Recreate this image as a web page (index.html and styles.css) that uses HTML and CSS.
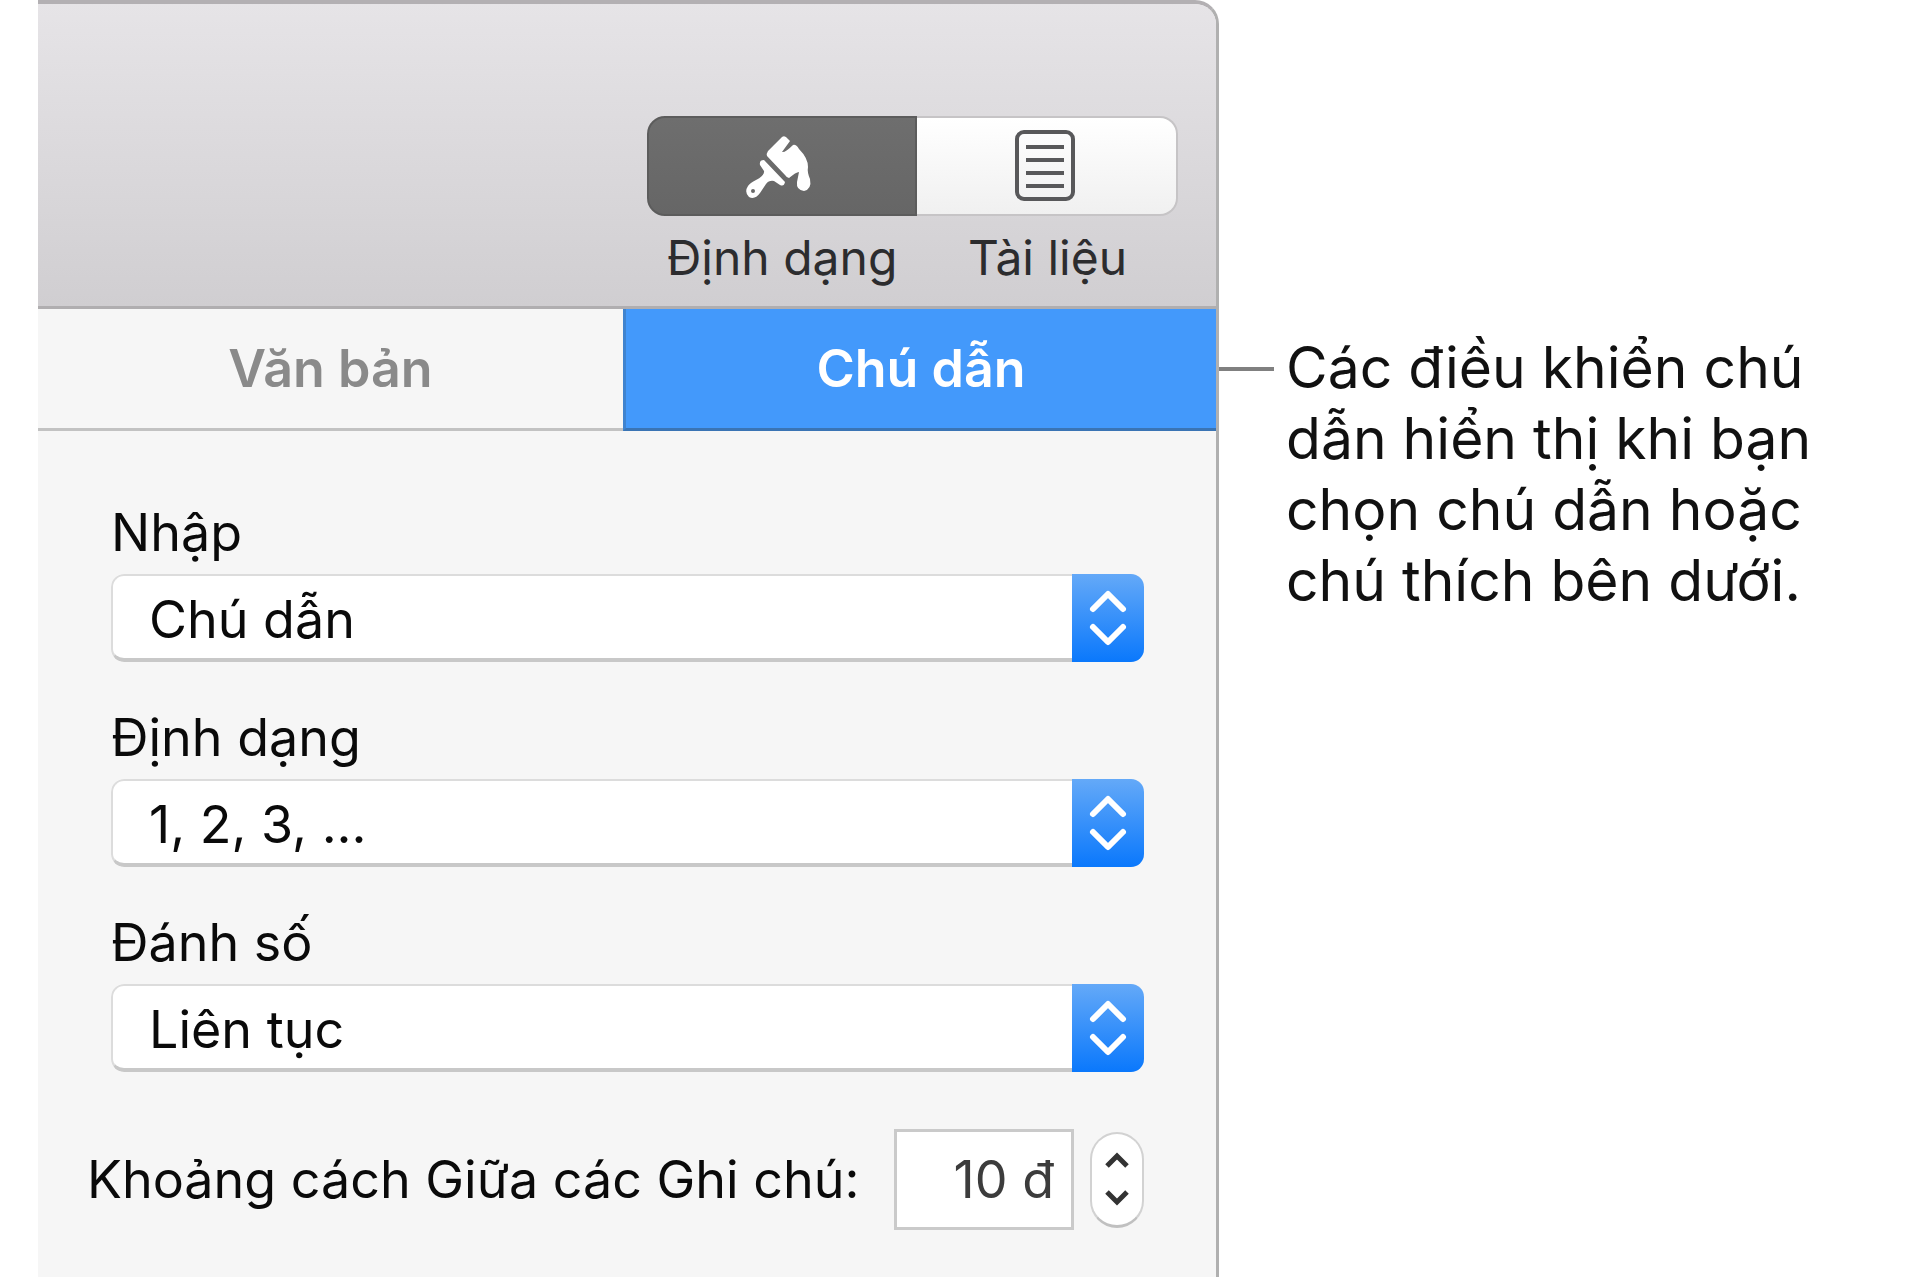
FILE: index.html
```html
<!DOCTYPE html>
<html lang="vi">
<head>
<meta charset="utf-8">
<meta name="viewport" content="width=device-width, initial-scale=1">
<title>Chú dẫn</title>
<link rel="stylesheet" href="styles.css">
</head>
<body>
<svg class="symbols" aria-hidden="true">
  <symbol id="chevrons" viewBox="0 0 72 88">
    <path d="M21 35 36 20 51 35M21 53 36 68 51 53"/>
  </symbol>
</svg>
<main class="page">
  <section class="panel">
    <header class="toolbar">
      <button class="tool tool-format" type="button" aria-pressed="true">
        <span class="tool-face">
          <svg class="brush" viewBox="0 0 120 110" aria-hidden="true">
            <path d="M62 26Q65 24 68 28L70 30 62 41Q65 42 73 34Q76 33 79 38Q88 47 88 56Q87 61 90 68Q92 78 84 80Q76 79 77 71L79 61Q76 61 69 67Q67 67 65 64L47 45Q46 43 48 40Z"/>
            <path d="M44 49 65 71Q64 76 60 74L54 70Q49 69 46 73L40 82Q35 89 29 86Q24 81 28 75Q30 72 36 69Q45 64 44 60L40 54Q39 49 44 49Z"/>
            <circle class="brush-hole" cx="33" cy="80" r="2"/>
          </svg>
        </span>
        <span class="tool-label">Định dạng</span>
      </button>
      <button class="tool tool-document" type="button" aria-pressed="false">
        <span class="tool-face">
          <svg class="sheet" viewBox="0 0 60 72" aria-hidden="true">
            <rect x="2" y="2" width="56" height="67" rx="7"/>
            <path d="M11 17H49M11 30H49M11 43H49M11 56H49"/>
          </svg>
        </span>
        <span class="tool-label">Tài liệu</span>
      </button>
    </header>
    <nav class="tabs">
      <button class="tab" type="button">Văn bản</button>
      <button class="tab tab-active" type="button">Chú dẫn</button>
    </nav>
    <form class="form">
      <div class="field">
        <label class="label" for="insert">Nhập</label>
        <div class="popup">
          <select class="select" id="insert"><option>Chú dẫn</option></select>
          <svg class="cap" aria-hidden="true"><use href="#chevrons"/></svg>
        </div>
      </div>
      <div class="field">
        <label class="label" for="format">Định dạng</label>
        <div class="popup">
          <select class="select" id="format"><option>1, 2, 3, ...</option></select>
          <svg class="cap" aria-hidden="true"><use href="#chevrons"/></svg>
        </div>
      </div>
      <div class="field">
        <label class="label" for="numbering">Đánh số</label>
        <div class="popup">
          <select class="select" id="numbering"><option>Liên tục</option></select>
          <svg class="cap" aria-hidden="true"><use href="#chevrons"/></svg>
        </div>
      </div>
      <div class="spacing">
        <label class="label spacing-label" for="gap">Khoảng cách Giữa các Ghi chú:</label>
        <input class="amount" id="gap" type="text" value="10 đ">
        <div class="stepper">
          <button class="step" type="button" aria-label="Tăng"><svg viewBox="0 0 24 16" aria-hidden="true"><path d="M2 14 12 4 22 14"/></svg></button>
          <button class="step" type="button" aria-label="Giảm"><svg viewBox="0 0 24 16" aria-hidden="true"><path d="M2 2 12 12 22 2"/></svg></button>
        </div>
      </div>
    </form>
  </section>
  <aside class="callout">
    <span class="leader"></span>
    <p class="note">Các điều khiển chú<br>dẫn hiển thị khi bạn<br>chọn chú dẫn hoặc<br>chú thích bên dưới.</p>
  </aside>
</main>
</body>
</html>
```
FILE: styles.css
```css
* {
  box-sizing: border-box;
}

body {
  margin: 0;
  background: #fff;
  color: #0a0a0a;
  font-family: Inter, Roboto, sans-serif;
  font-size: 52px;
}

button,
select,
input {
  margin: 0;
  padding: 0;
  border: 0;
  background: none;
  color: inherit;
  font: inherit;
}

.symbols {
  display: block;
  width: 0;
  height: 0;
}

.page {
  display: flex;
  align-items: flex-start;
  padding-left: 38px;
}

.panel {
  flex: 1;
  border-top: 4px solid #b3b0b3;
  border-right: 3px solid #b0b0b0;
  border-top-right-radius: 24px;
  background: #f6f6f6;
  overflow: hidden;
}

/* Toolbar */
.toolbar {
  display: flex;
  justify-content: flex-end;
  height: 305px;
  padding: 112px 38px 0 0;
  border-bottom: 3px solid #b0aeb0;
  background: linear-gradient(#e6e4e7, #d0ced1);
}

.tool {
  display: flex;
  flex-direction: column;
  align-items: center;
  color: #2c2c2e;
  font-size: 48px;
}

.tool-format {
  width: 270px;
}

.tool-document {
  width: 261px;
}

.tool-face {
  display: flex;
  align-items: center;
  justify-content: center;
  width: 100%;
  height: 100px;
}

.tool-format .tool-face {
  border: 2px solid #5c5c5c;
  border-radius: 18px 0 0 18px;
  background: linear-gradient(#6e6e6e, #666);
}

.tool-document .tool-face {
  border: 2px solid #c6c4c6;
  border-left: 0;
  border-radius: 0 18px 18px 0;
  background: linear-gradient(#fff, #f0f0f0);
}

.tool-label {
  line-height: 84px;
}

.brush {
  width: 120px;
  height: 110px;
  flex: none;
  margin-right: 4px;
  fill: #fff;
}

.brush-hole {
  fill: #6a6a6a;
}

.sheet {
  width: 60px;
  height: 72px;
  margin-right: 4px;
  fill: none;
  stroke: #58585a;
  stroke-width: 4;
}

/* Tabs */
.tabs {
  display: flex;
  height: 122px;
}

.tab {
  flex: 1;
  border-bottom: 3px solid #c2c2c2;
  color: #8a8a8a;
  font-weight: 600;
}

.tab-active {
  flex: 0 0 593px;
  border-bottom-color: #3a74b4;
  border-left: 3px solid #3f83cf;
  background: #4399fb;
  color: #fff;
}

/* Form */
.form {
  padding: 64px 72px 47px 73px;
}

.field {
  margin-bottom: 38px;
}

.label {
  display: block;
  line-height: 75px;
}

.field .label {
  padding-bottom: 4px;
}

.popup {
  display: flex;
  height: 88px;
  border-radius: 13px;
  overflow: hidden;
}

.select {
  flex: 1;
  appearance: none;
  padding: 5px 0 0 36px;
  border: 2px solid #dcdcdc;
  border-right: 0;
  border-bottom: 4px solid #c8c8c8;
  border-radius: 13px 0 0 13px;
  background: #fff;
}

.cap {
  width: 72px;
  height: 88px;
  background: linear-gradient(#64a9f8, #0a78fc);
  fill: none;
  stroke: #fff;
  stroke-width: 6;
  stroke-linecap: round;
  stroke-linejoin: round;
}

.spacing {
  display: flex;
  align-items: center;
  gap: 16px;
  margin: 57px 0 0 -24px;
}

.spacing-label {
  flex: 1;
  white-space: nowrap;
}

.amount {
  width: 180px;
  height: 101px;
  padding-right: 17px;
  border: 3px solid #cacaca;
  background: #fff;
  color: #3c3c3c;
  text-align: right;
}

.stepper {
  display: flex;
  flex-direction: column;
  justify-content: center;
  gap: 22px;
  width: 54px;
  height: 96px;
  border: 2px solid #d2d2d2;
  border-bottom: 3px solid #c0c0c0;
  border-radius: 27px;
  background: #fff;
}

.step {
  display: flex;
  justify-content: center;
}

.step svg {
  width: 24px;
  height: 16px;
  fill: none;
  stroke: #333;
  stroke-width: 5;
}

/* Callout */
.callout {
  display: flex;
  align-items: flex-start;
  width: 701px;
  padding-top: 332px;
}

.leader {
  width: 55px;
  height: 4px;
  margin: 35px 12px 0 0;
  background: #808080;
}

.note {
  margin: 0;
  color: #111;
  font-size: 57px;
  line-height: 71px;
  white-space: nowrap;
}
```
